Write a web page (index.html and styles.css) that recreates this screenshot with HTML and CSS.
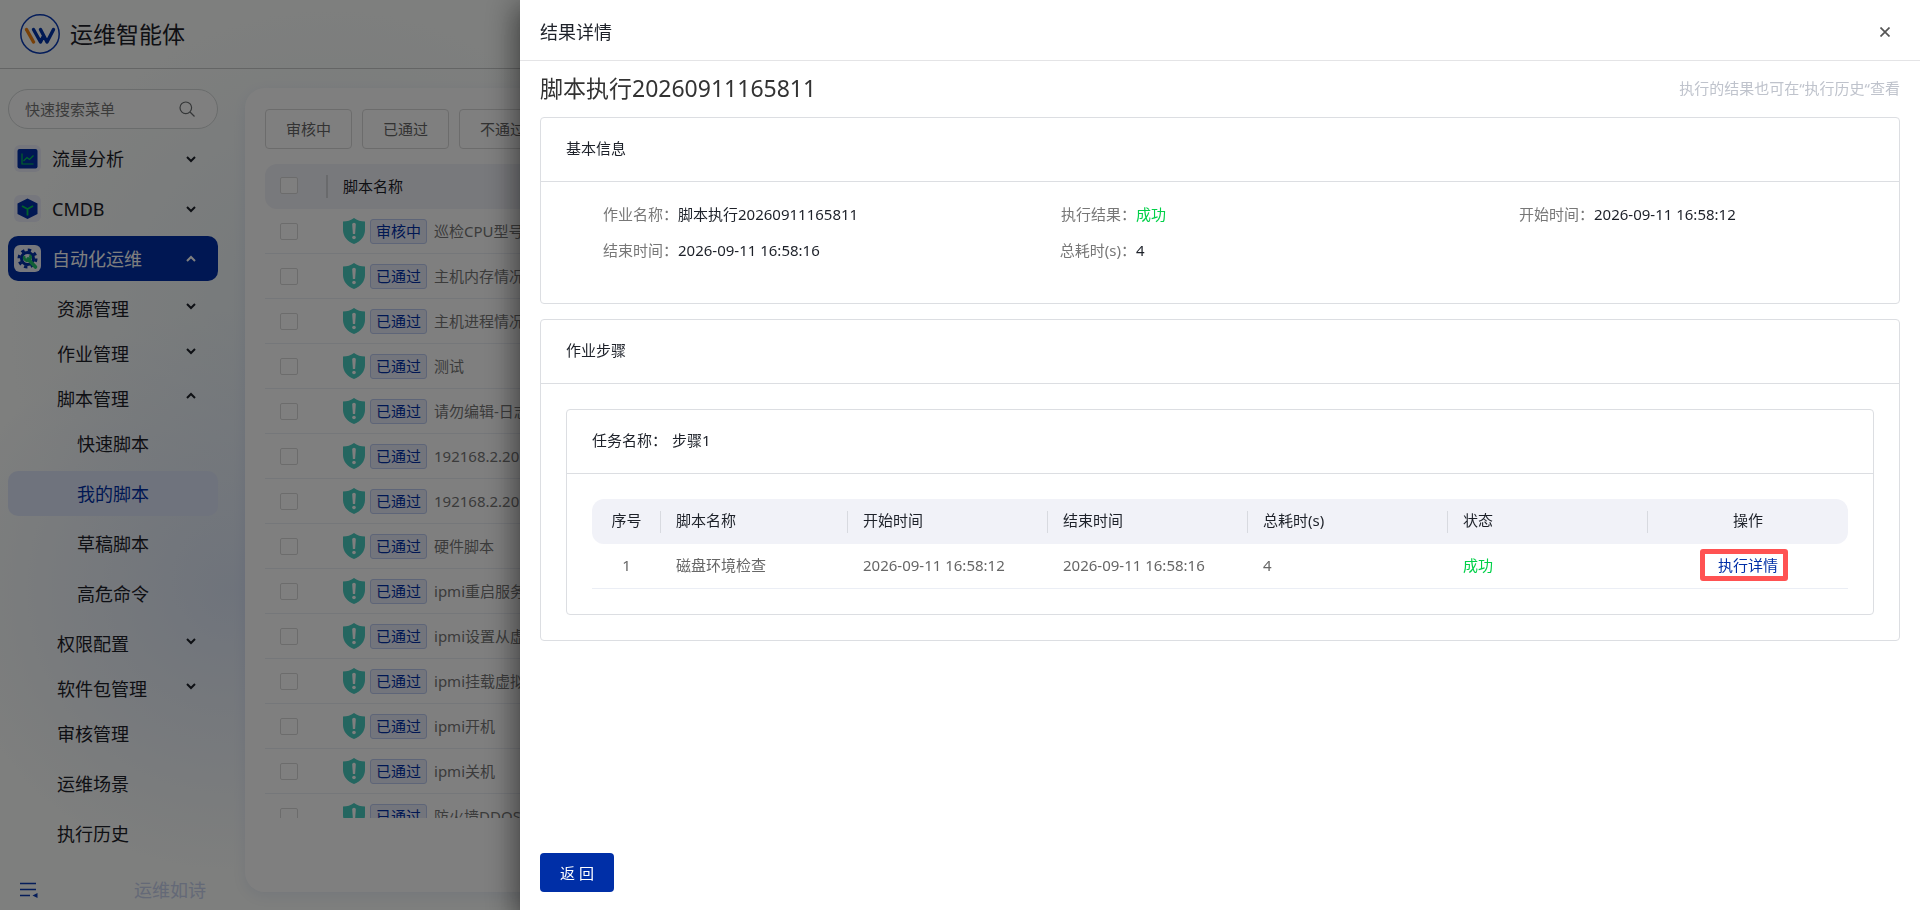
FILE: index.html
```html
<!DOCTYPE html>
<html lang="zh-CN">
<head>
  <meta charset="UTF-8">
  <meta name="viewport" content="width=device-width, initial-scale=1.0">
  <title>运维智能体</title>
  <link rel="stylesheet" href="styles.css">
</head>
<body>
  <!-- Icons -->
  <svg class="sprite" aria-hidden="true">
    <symbol id="arrow-down" viewBox="0 0 10 8"><path d="M1 2l4 4 4-4" fill="none" stroke="currentColor" stroke-width="2"/></symbol>
    <symbol id="arrow-up" viewBox="0 0 10 8"><path d="M1 6l4-4 4 4" fill="none" stroke="currentColor" stroke-width="2"/></symbol>
    <symbol id="shield" viewBox="0 0 22 26">
      <path d="M11 0c3 2.400 7 3.600 11 3.600V12c0 6.500-4.500 11.500-11 14C4.500 23.500 0 18.500 0 12V3.600C4 3.600 8 2.400 11 0z" fill="#48ccc0"/>
      <path d="M9.200 6.500a1.800 1.800 0 0 1 3.600 0l-.7 9.500h-2.200z" fill="#fff"/>
      <circle cx="11" cy="19.500" r="1.800" fill="#fff"/>
    </symbol>
  </svg>

  <header class="topbar">
    <svg class="logo" viewBox="0 0 40 40">
      <circle cx="20" cy="20" r="19.200" fill="none" stroke="#0a3bb5" stroke-width="1.500"/>
      <g fill="none" stroke-width="3.400" stroke-linecap="round" stroke-linejoin="round">
        <path d="M6.500 15.500l7 12.500" stroke="#f08010"/>
        <path d="M13.500 15.500l7 12.500 2.500-5M20.500 15.500l6.500 12.500L33.500 15.500" stroke="#0033a8"/>
      </g>
    </svg>
    <span class="brand">运维智能体</span>
  </header>

  <div class="layout">
    <aside class="sidebar">
      <div class="search">
        <input type="text" placeholder="快速搜索菜单" aria-label="快速搜索菜单">
        <svg viewBox="0 0 16 16"><circle cx="6.800" cy="6.800" r="5.800" fill="none" stroke="currentColor" stroke-width="1.200"/><path d="M11 11l4.500 4.500" stroke="currentColor" stroke-width="1.200"/></svg>
      </div>

      <nav class="menu">
        <button class="menu-title">
          <svg class="menu-icon" viewBox="0 0 27 27">
            <rect width="27" height="27" rx="6" fill="#edeefb"/>
            <rect x="3.500" y="4" width="20" height="19.500" rx="2" fill="#002fa7"/>
            <path d="M8 8.500V19h11.500M9.500 16l3.500-3.500 2.500 2 4-4" fill="none" stroke="#00c853" stroke-width="1.200"/>
          </svg>
          <span>流量分析</span><svg class="arrow"><use href="#arrow-down"/></svg>
        </button>
        <button class="menu-title">
          <svg class="menu-icon" viewBox="0 0 27 27">
            <rect width="27" height="27" rx="6" fill="#edeefb"/>
            <path d="M13.500 3.500l10 5v10.500l-10 5-10-5V8.500z" fill="#002fa7"/>
            <path d="M8 11l5.500 3 5.500-3M13.500 14v6.500" fill="none" stroke="#00c853" stroke-width="1.800"/>
          </svg>
          <span>CMDB</span><svg class="arrow"><use href="#arrow-down"/></svg>
        </button>
        <button class="menu-title active">
          <svg class="menu-icon" viewBox="0 0 27 27">
            <rect width="27" height="27" rx="6" fill="#eef0fa"/>
            <circle cx="13.500" cy="13.500" r="8.500" fill="none" stroke="#002fa7" stroke-width="3" stroke-dasharray="3.340"/>
            <circle cx="13.500" cy="13.500" r="6" fill="none" stroke="#002fa7" stroke-width="3"/>
            <path d="M14 14l7.500 8" stroke="#1fbf6b" stroke-width="3.600" stroke-linecap="round"/>
            <path d="M10.500 11a3.200 3.200 0 1 0 5.200-.8" fill="none" stroke="#1fbf6b" stroke-width="2.600"/>
          </svg>
          <span>自动化运维</span><svg class="arrow"><use href="#arrow-up"/></svg>
        </button>

        <button class="menu-title sub"><span>资源管理</span><svg class="arrow"><use href="#arrow-down"/></svg></button>
        <button class="menu-title sub"><span>作业管理</span><svg class="arrow"><use href="#arrow-down"/></svg></button>
        <button class="menu-title sub"><span>脚本管理</span><svg class="arrow"><use href="#arrow-up"/></svg></button>
        <a class="menu-link third" href="#">快速脚本</a>
        <a class="menu-link third current" href="#">我的脚本</a>
        <a class="menu-link third" href="#">草稿脚本</a>
        <a class="menu-link third" href="#">高危命令</a>
        <button class="menu-title sub"><span>权限配置</span><svg class="arrow"><use href="#arrow-down"/></svg></button>
        <button class="menu-title sub"><span>软件包管理</span><svg class="arrow"><use href="#arrow-down"/></svg></button>
        <a class="menu-link" href="#">审核管理</a>
        <a class="menu-link" href="#">运维场景</a>
        <a class="menu-link" href="#">执行历史</a>
      </nav>

      <div class="sidebar-footer">
        <button class="fold" aria-label="收起菜单">
          <svg viewBox="0 0 18 16"><path d="M0 1.500h16M0 7.500h16M0 13.500h10" stroke="#0a3bb5" stroke-width="1.500"/><path d="M17.500 11v5L12.500 13.500z" fill="#0a3bb5"/></svg>
        </button>
        <span>运维如诗</span>
      </div>
    </aside>

    <main class="content">
      <div class="filters">
        <button>审核中</button>
        <button>已通过</button>
        <button>不通过</button>
      </div>
      <div class="script-list">
        <table>
          <thead>
            <tr><th class="check"><input type="checkbox" aria-label="全选"></th><th class="name">脚本名称</th></tr>
          </thead>
          <tbody>
            <tr><td class="check"><input type="checkbox" aria-label="选择"></td><td class="name"><div class="script"><svg class="shield"><use href="#shield"/></svg><span class="tag">审核中</span>巡检CPU型号</div></td></tr>
            <tr><td class="check"><input type="checkbox" aria-label="选择"></td><td class="name"><div class="script"><svg class="shield"><use href="#shield"/></svg><span class="tag">已通过</span>主机内存情况</div></td></tr>
            <tr><td class="check"><input type="checkbox" aria-label="选择"></td><td class="name"><div class="script"><svg class="shield"><use href="#shield"/></svg><span class="tag">已通过</span>主机进程情况</div></td></tr>
            <tr><td class="check"><input type="checkbox" aria-label="选择"></td><td class="name"><div class="script"><svg class="shield"><use href="#shield"/></svg><span class="tag">已通过</span>测试</div></td></tr>
            <tr><td class="check"><input type="checkbox" aria-label="选择"></td><td class="name"><div class="script"><svg class="shield"><use href="#shield"/></svg><span class="tag">已通过</span>请勿编辑-日志</div></td></tr>
            <tr><td class="check"><input type="checkbox" aria-label="选择"></td><td class="name"><div class="script"><svg class="shield"><use href="#shield"/></svg><span class="tag">已通过</span>192168.2.20</div></td></tr>
            <tr><td class="check"><input type="checkbox" aria-label="选择"></td><td class="name"><div class="script"><svg class="shield"><use href="#shield"/></svg><span class="tag">已通过</span>192168.2.20</div></td></tr>
            <tr><td class="check"><input type="checkbox" aria-label="选择"></td><td class="name"><div class="script"><svg class="shield"><use href="#shield"/></svg><span class="tag">已通过</span>硬件脚本</div></td></tr>
            <tr><td class="check"><input type="checkbox" aria-label="选择"></td><td class="name"><div class="script"><svg class="shield"><use href="#shield"/></svg><span class="tag">已通过</span>ipmi重启服务</div></td></tr>
            <tr><td class="check"><input type="checkbox" aria-label="选择"></td><td class="name"><div class="script"><svg class="shield"><use href="#shield"/></svg><span class="tag">已通过</span>ipmi设置从虚</div></td></tr>
            <tr><td class="check"><input type="checkbox" aria-label="选择"></td><td class="name"><div class="script"><svg class="shield"><use href="#shield"/></svg><span class="tag">已通过</span>ipmi挂载虚拟</div></td></tr>
            <tr><td class="check"><input type="checkbox" aria-label="选择"></td><td class="name"><div class="script"><svg class="shield"><use href="#shield"/></svg><span class="tag">已通过</span>ipmi开机</div></td></tr>
            <tr><td class="check"><input type="checkbox" aria-label="选择"></td><td class="name"><div class="script"><svg class="shield"><use href="#shield"/></svg><span class="tag">已通过</span>ipmi关机</div></td></tr>
            <tr><td class="check"><input type="checkbox" aria-label="选择"></td><td class="name"><div class="script"><svg class="shield"><use href="#shield"/></svg><span class="tag">已通过</span>防火墙DDOS</div></td></tr>
          </tbody>
        </table>
      </div>
    </main>
  </div>

  <div class="mask"></div>

  <!-- Result drawer -->
  <section class="drawer">
    <header class="drawer-header">
      <h2>结果详情</h2>
      <button class="close" aria-label="关闭"><svg viewBox="0 0 10 10"><path d="M.5.5l9 9M9.500.5l-9 9" stroke="currentColor" stroke-width="1.700"/></svg></button>
    </header>

    <div class="drawer-body">
      <div class="result-title">
        <h1>脚本执行20260911165811</h1>
        <p>执行的结果也可在“执行历史“查看</p>
      </div>

      <div class="card">
        <h3>基本信息</h3>
        <dl class="info">
          <div><dt>作业名称：</dt><dd>脚本执行20260911165811</dd></div>
          <div><dt>执行结果：</dt><dd class="success">成功</dd></div>
          <div><dt>开始时间：</dt><dd>2026-09-11 16:58:12</dd></div>
          <div><dt>结束时间：</dt><dd>2026-09-11 16:58:16</dd></div>
          <div><dt>总耗时(s)：</dt><dd>4</dd></div>
        </dl>
      </div>

      <div class="card">
        <h3>作业步骤</h3>
        <div class="card-body">
          <div class="card">
            <h3><span>任务名称：</span><span>步骤1</span></h3>
            <div class="card-body">
              <table class="steps">
                <colgroup><col class="col-index"><col class="col-name"><col><col><col><col><col></colgroup>
                <thead>
                  <tr><th class="center">序号</th><th>脚本名称</th><th>开始时间</th><th>结束时间</th><th>总耗时(s)</th><th>状态</th><th class="center">操作</th></tr>
                </thead>
                <tbody>
                  <tr>
                    <td class="center">1</td>
                    <td>磁盘环境检查</td>
                    <td>2026-09-11 16:58:12</td>
                    <td>2026-09-11 16:58:16</td>
                    <td>4</td>
                    <td class="success">成功</td>
                    <td class="center"><a class="detail" href="#">执行详情</a></td>
                  </tr>
                </tbody>
              </table>
            </div>
          </div>
        </div>
      </div>
    </div>

    <footer class="drawer-footer">
      <button class="back">返 回</button>
    </footer>
  </section>
</body>
</html>
```
FILE: styles.css
```css
* {
  box-sizing: border-box;
}

body {
  margin: 0;
  height: 100vh;
  overflow: hidden;
  display: flex;
  flex-direction: column;
  font-family: "Noto Sans", "Noto Sans CJK SC", sans-serif;
  font-size: 15px;
  line-height: 22px;
  color: #1d2129;
  background:
    radial-gradient(circle at 230px 590px, rgba(215, 226, 246, 0.8), rgba(215, 226, 246, 0) 280px),
    radial-gradient(circle at 330px 330px, rgba(232, 241, 246, 0.9), rgba(232, 241, 246, 0) 320px),
    #fcfefc;
}

h1, h2, h3, p, dl, dd {
  margin: 0;
  font-weight: normal;
}

button, input {
  font: inherit;
  color: inherit;
}

button {
  cursor: pointer;
}

a {
  color: inherit;
  text-decoration: none;
}

.sprite {
  display: none;
}

/* Header */
.topbar {
  display: flex;
  align-items: center;
  gap: 10px;
  height: 69px;
  padding: 0 20px;
  border-bottom: 1px solid #c8caca;
}

.logo {
  width: 40px;
  height: 40px;
}

.brand {
  font-size: 23px;
  line-height: 32px;
}

.layout {
  flex: 1;
  display: flex;
  min-height: 0;
}

/* Sidebar */
.sidebar {
  display: flex;
  flex-direction: column;
  width: 245px;
  padding: 20px 27px 0 8px;
}

.search {
  display: flex;
  align-items: center;
  height: 40px;
  padding: 0 22px 0 16px;
  border: 1px solid #d4d8d8;
  border-radius: 20px;
  background: #fff;
  color: #6a6e70;
}

.search input {
  flex: 1;
  min-width: 0;
  padding: 0;
  border: none;
  background: none;
}

.search input::placeholder {
  color: #777;
}

.search svg {
  width: 16px;
  height: 16px;
}

.menu {
  display: flex;
  flex-direction: column;
  flex: 1;
  padding-top: 7px;
}

.menu-title, .menu-link {
  display: flex;
  align-items: center;
  height: 45px;
  margin-bottom: 5px;
  padding: 0 22px 0 6px;
  border: none;
  border-radius: 10px;
  background: none;
  font-size: 18px;
  line-height: 28px;
  text-align: left;
}

.menu-title span {
  flex: 1;
}

.menu-title.active {
  background: #002fa7;
  color: #fff;
}

.menu-title.sub {
  margin-bottom: 0;
  padding-left: 49px;
}

.menu-title.sub .arrow {
  margin-bottom: 5px;
}

.menu-link {
  padding-left: 49px;
}

.menu-link.third {
  padding-left: 69px;
}

.menu-link.current {
  background: #dfe7fa;
  color: #002fa7;
}

.menu-icon {
  width: 27px;
  height: 27px;
  margin-right: 11px;
}

.arrow {
  width: 10px;
  height: 8px;
}

.sidebar-footer {
  display: flex;
  align-items: center;
  justify-content: space-between;
  height: 40px;
  padding: 0 12px;
  font-size: 18px;
  color: #c8d2ee;
}

.fold {
  padding: 0;
  border: none;
  background: none;
}

.fold svg {
  display: block;
  width: 18px;
  height: 16px;
}

/* Script list */
.content {
  flex: 1;
  min-width: 0;
  margin: 19px 20px 18px 0;
  padding: 21px 20px;
  border-radius: 20px;
  background: #fff;
  box-shadow: 0 4px 14px rgba(0, 47, 167, 0.08);
}

.filters {
  display: flex;
  gap: 10px;
  margin-bottom: 15px;
}

.filters button {
  height: 40px;
  padding: 0 20px;
  border: 1px solid #d9d9d9;
  border-radius: 4px;
  background: #fff;
  color: #666;
}

.script-list {
  height: calc(100vh - 256px);
  overflow: hidden;
}

.script-list table {
  width: 100%;
  border-collapse: separate;
  border-spacing: 0;
  table-layout: fixed;
}

.script-list th, .script-list td {
  height: 45px;
  padding: 0 15px;
  font-weight: normal;
  text-align: left;
}

.script-list th {
  padding-bottom: 2px;
  background: #f1f2f8;
}

.script-list td {
  border-bottom: 1px solid #ebeef5;
  color: #777;
}

.script-list .check {
  width: 63px;
}

.script-list th.check {
  border-radius: 12px 0 0 12px;
  background: linear-gradient(#d3d5d8, #d3d5d8) right center / 2px 23px no-repeat #f1f2f8;
}

.script-list input {
  display: block;
  appearance: none;
  width: 18px;
  height: 17px;
  margin: 0;
  border: 1px solid #d9d9d9;
  border-radius: 2px;
  background: #fff;
}

.script {
  display: flex;
  align-items: center;
  white-space: nowrap;
}

.shield {
  width: 22px;
  height: 26px;
  margin-right: 5px;
}

.tag {
  height: 25px;
  margin-right: 7px;
  padding: 0 5px;
  border: 1px solid #bccaf0;
  border-radius: 3px;
  background: #e6ebf8;
  color: #002fa7;
}

.mask {
  position: fixed;
  inset: 0;
  background: rgba(0, 0, 0, 0.5);
}

/* Drawer */
.drawer {
  position: fixed;
  top: 0;
  right: 0;
  bottom: 0;
  left: 520px;
  display: flex;
  flex-direction: column;
  background: #fff;
  box-shadow: 0 8px 10px -5px rgba(0, 0, 0, 0.2), 0 16px 24px 2px rgba(0, 0, 0, 0.14), 0 6px 30px 5px rgba(0, 0, 0, 0.4);
}

.drawer-header {
  display: flex;
  align-items: center;
  justify-content: space-between;
  height: 61px;
  padding: 4px 30px 0 20px;
  border-bottom: 1px solid #e4e4e6;
}

.drawer-header h2 {
  font-size: 18px;
  line-height: 28px;
}

.close {
  padding: 0;
  border: none;
  background: none;
  color: #555;
}

.close svg {
  display: block;
  width: 10px;
  height: 10px;
}

.drawer-body {
  flex: 1;
  padding: 0 20px;
}

.result-title {
  display: flex;
  align-items: center;
  justify-content: space-between;
  height: 56px;
  padding-bottom: 2px;
}

.result-title h1 {
  font-size: 23px;
  line-height: 32px;
  color: #333;
}

.result-title p {
  color: #bfc3cc;
}

.card {
  border: 1px solid #dcdee2;
  border-radius: 4px;
}

.card + .card {
  margin-top: 15px;
}

.card h3 {
  display: flex;
  gap: 5px;
  padding: 19px 25px 22px;
  border-bottom: 1px solid #dcdee2;
  font-size: 15px;
}

.card-body {
  padding: 25px;
}

.info {
  display: grid;
  grid-template-columns: repeat(3, 1fr);
  column-gap: 66px;
  padding: 14px 25px 35px;
}

.info div {
  display: flex;
  line-height: 36px;
}

.info dt {
  width: 112px;
  text-align: right;
  color: #777;
}

.card .success {
  color: #00d048;
}

.steps {
  width: 100%;
  border-collapse: separate;
  border-spacing: 0;
  table-layout: fixed;
}

.col-index {
  width: 69px;
}

.col-name {
  width: 187px;
}

.steps th, .steps td {
  height: 45px;
  padding: 0 15px;
  font-weight: normal;
  text-align: left;
}

.steps th, .steps th.center {
  padding-bottom: 4px;
  background: linear-gradient(#d8dae0, #d8dae0) right center / 1px 22px no-repeat #f1f2f8;
}

.steps th:first-child {
  border-radius: 12px 0 0 12px;
}

.steps th.center:last-child {
  border-radius: 0 12px 12px 0;
  background: #f1f2f8;
}

.steps td {
  padding-bottom: 2px;
  border-bottom: 1px solid #ebeef5;
  color: #666;
}

.steps .center {
  padding-left: 0;
  padding-right: 0;
  text-align: center;
}

.detail {
  position: relative;
  color: #002fa7;
}

/* Red frame around the link */
.detail::after {
  content: "";
  position: absolute;
  inset: -6px -10px -6px -18px;
  border: 5px solid #ff5252;
  border-radius: 3px;
}

.drawer-footer {
  padding: 0 20px 18px;
}

.back {
  height: 39px;
  padding: 0 20px;
  border: none;
  border-radius: 4px;
  background: #002fa7;
  color: #fff;
}
```
